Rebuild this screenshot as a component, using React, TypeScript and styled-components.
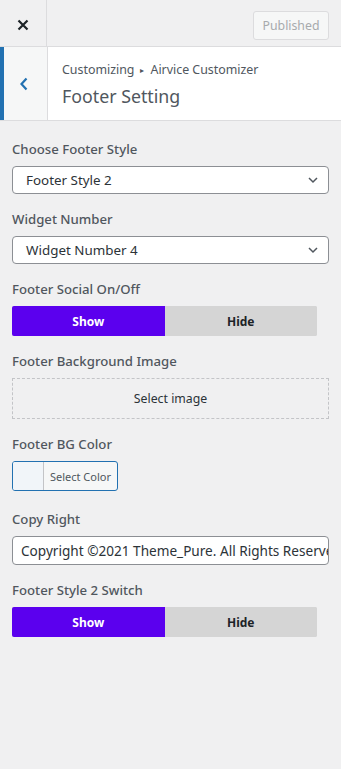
import React from 'react'
import styled, { createGlobalStyle } from 'styled-components'

const GlobalStyle = createGlobalStyle`
  html, body {
    margin: 0;
    padding: 0;
    background: #f0f0f1;
    font-family: "Noto Sans", "Open Sans", sans-serif;
    color: #50575e;
  }
`

const Panel = styled.div`
  width: 341px;
  min-height: 769px;
  background: #f0f0f1;
`

const TopBar = styled.div`
  display: flex;
  align-items: flex-start;
  height: 46px;
  border-bottom: 1px solid #dcdcde;
`

const CloseButton = styled.div`
  width: 47px;
  height: 46px;
  box-sizing: border-box;
  padding-top: 3px;
  display: flex;
  align-items: center;
  justify-content: center;
  border-right: 1px solid #dcdcde;
  color: #1d2327;
`

const TopSpacer = styled.div`
  flex: 1;
`

const PublishedButton = styled.div`
  margin: 11px 12px 0 0;
  height: 29px;
  width: 76px;
  box-sizing: border-box;
  display: flex;
  align-items: center;
  justify-content: center;
  border: 1px solid #dcdcde;
  border-radius: 3px;
  background: #f6f7f7;
  color: #a7aaad;
  font-size: 12.3px;
`

const SectionHeader = styled.div`
  display: flex;
  background: #fff;
  border-bottom: 1px solid #dcdcde;
  height: 73px;
`

const BackButton = styled.div`
  width: 48px;
  box-sizing: border-box;
  border-left: 4px solid #2271b1;
  border-right: 1px solid #dcdcde;
  background: #f6f7f7;
  color: #2271b1;
  display: flex;
  align-items: center;
  justify-content: center;
  padding-right: 3px;
`

const Titles = styled.div`
  padding: 13px 14px 0 14px;
  display: flex;
  flex-direction: column;
`

const Breadcrumb = styled.div`
  font-size: 12.4px;
  color: #50575e;
  line-height: 20px;
  display: flex;
  align-items: center;
  gap: 6px;
`

const Arrow = styled.span`
  font-size: 8px;
`

const SectionTitle = styled.div`
  font-size: 17.8px;
  line-height: 28px;
  color: #50575e;
  margin-top: 2px;
`

const Controls = styled.div`
  padding: 18px 12px 12px;
  display: flex;
  flex-direction: column;
`

const Control = styled.div<{ spaced?: boolean }>`
  margin-bottom: ${p => (p.spaced ? '18px' : '15px')};
`

const Label = styled.div`
  font-size: 13.2px;
  font-weight: 500;
  line-height: 20px;
  color: #50575e;
  margin-bottom: 7px;
`

const Select = styled.div`
  height: 28px;
  box-sizing: border-box;
  border: 1px solid #8c8f94;
  border-radius: 4px;
  background: #fff;
  display: flex;
  align-items: center;
  justify-content: space-between;
  padding: 0 8px 0 13px;
  font-size: 13.4px;
  color: #2c3338;
`

const Toggle = styled.div`
  display: flex;
  width: 305px;
  height: 30px;
  border-radius: 2px;
  overflow: hidden;
  background: #d5d5d5;
`

const ToggleOption = styled.div<{ active?: boolean }>`
  flex: 1;
  display: flex;
  align-items: center;
  justify-content: center;
  font-size: 12px;
  font-weight: 700;
  background: ${p => (p.active ? '#5b00ee' : '#d5d5d5')};
  color: ${p => (p.active ? '#fff' : '#1d2327')};
`

const ImageDrop = styled.div`
  height: 41px;
  box-sizing: border-box;
  border: 1px dashed #c3c4c7;
  display: flex;
  align-items: center;
  justify-content: center;
  font-size: 12.3px;
  color: #2c3338;
`

const ColorButton = styled.div`
  width: 106px;
  height: 30px;
  box-sizing: border-box;
  border: 1px solid #2271b1;
  border-radius: 3px;
  display: flex;
  overflow: hidden;
  background: #f6f7f7;
`

const Swatch = styled.div`
  width: 30px;
  background: #f1f5f9;
  border-right: 1px solid #c3c4c7;
`

const ColorLabel = styled.div`
  flex: 1;
  display: flex;
  align-items: center;
  justify-content: center;
  font-size: 11px;
  color: #50575e;
`

const TextInput = styled.div`
  height: 29px;
  box-sizing: border-box;
  border: 1px solid #8c8f94;
  border-radius: 4px;
  background: #fff;
  display: flex;
  align-items: center;
  padding: 0 8px;
  font-size: 13.6px;
  color: #2c3338;
  white-space: nowrap;
  overflow: hidden;
`

const Chevron = () => (
  <svg width="14" height="14" viewBox="0 0 14 14" fill="none">
    <path d="M3 5l4 4 4-4" stroke="#50575e" strokeWidth="1.5" />
  </svg>
)

const App: React.FC = () => {
  return (
    <Panel>
      <GlobalStyle />
      <TopBar>
        <CloseButton>
          <svg width="14" height="14" viewBox="0 0 14 14">
            <path d="M2.5 2.5l9 9M11.5 2.5l-9 9" stroke="#1d2327" strokeWidth="2.2" />
          </svg>
        </CloseButton>
        <TopSpacer />
        <PublishedButton>Published</PublishedButton>
      </TopBar>
      <SectionHeader>
        <BackButton>
          <svg width="12" height="16" viewBox="0 0 12 16">
            <path d="M8.5 2.5L3.5 8l5 5.5" stroke="#2271b1" strokeWidth="2.2" fill="none" />
          </svg>
        </BackButton>
        <Titles>
          <Breadcrumb>
            Customizing <Arrow>▸</Arrow> Airvice Customizer
          </Breadcrumb>
          <SectionTitle>Footer Setting</SectionTitle>
        </Titles>
      </SectionHeader>
      <Controls>
        <Control>
          <Label>Choose Footer Style</Label>
          <Select>
            Footer Style 2
            <Chevron />
          </Select>
        </Control>
        <Control>
          <Label>Widget Number</Label>
          <Select>
            Widget Number 4
            <Chevron />
          </Select>
        </Control>
        <Control>
          <Label>Footer Social On/Off</Label>
          <Toggle>
            <ToggleOption active>Show</ToggleOption>
            <ToggleOption>Hide</ToggleOption>
          </Toggle>
        </Control>
        <Control>
          <Label>Footer Background Image</Label>
          <ImageDrop>Select image</ImageDrop>
        </Control>
        <Control spaced>
          <Label>Footer BG Color</Label>
          <ColorButton>
            <Swatch />
            <ColorLabel>Select Color</ColorLabel>
          </ColorButton>
        </Control>
        <Control>
          <Label>Copy Right</Label>
          <TextInput>Copyright ©2021 Theme_Pure. All Rights Reserved.</TextInput>
        </Control>
        <Control>
          <Label>Footer Style 2 Switch</Label>
          <Toggle>
            <ToggleOption active>Show</ToggleOption>
            <ToggleOption>Hide</ToggleOption>
          </Toggle>
        </Control>
      </Controls>
    </Panel>
  )
}

export default App
